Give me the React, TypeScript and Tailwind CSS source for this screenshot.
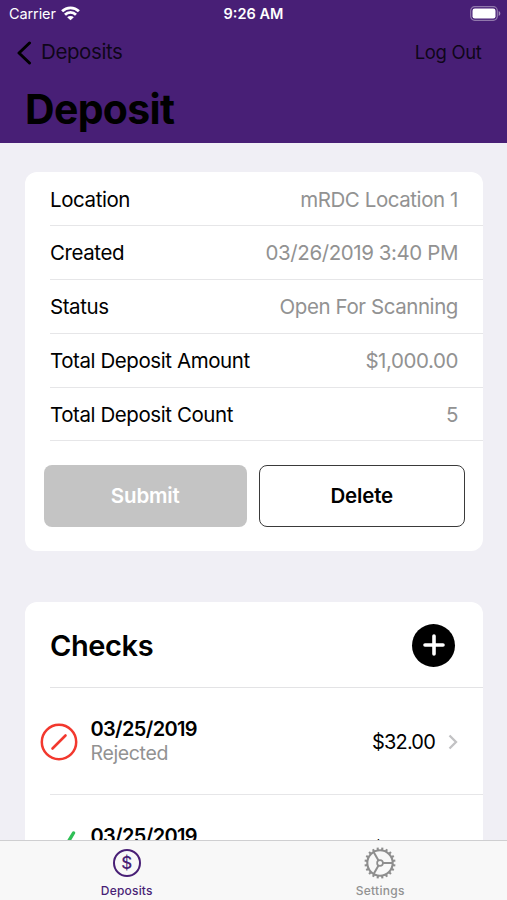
const details = [
  { label: 'Location', value: 'mRDC Location 1' },
  { label: 'Created', value: '03/26/2019 3:40 PM' },
  { label: 'Status', value: 'Open For Scanning' },
  { label: 'Total Deposit Amount', value: '$1,000.00' },
  { label: 'Total Deposit Count', value: '5' },
]

const checks = [
  { id: 1, date: '03/25/2019', status: 'Rejected', amount: '$32.00' },
  { id: 2, date: '03/25/2019', status: 'Accepted', amount: '$32.00' },
]

function WifiIcon() {
  return (
    <svg width="19" height="15" viewBox="0 0 19 15" fill="none" stroke="white" strokeWidth="2.8">
      <path d="M1.1 5.3a12 12 0 0 1 16.8 0" />
      <path d="M4 8.7a7.8 7.8 0 0 1 11 0" />
      <path d="M9.5 14.2 6.2 11.3a4.6 4.6 0 0 1 6.6 0Z" fill="white" stroke="none" />
    </svg>
  )
}

function BatteryIcon() {
  return (
    <svg width="31" height="15" viewBox="0 0 31 15">
      <rect x="0.7" y="0.7" width="26.6" height="13.6" rx="4" fill="none" stroke="white" strokeOpacity="0.4" strokeWidth="1.2" />
      <rect x="2.5" y="2.5" width="23" height="10" rx="2.3" fill="white" />
      <path d="M28.7 5v5c1-.4 1.6-1.4 1.6-2.5S29.7 5.4 28.7 5Z" fill="white" fillOpacity="0.5" />
    </svg>
  )
}

function StatusIcon({ status }: { status: string }) {
  if (status === 'Rejected') {
    return (
      <svg width="38" height="38" viewBox="0 0 38 38" fill="none" stroke="#f2382e" strokeWidth="2.5" strokeLinecap="round">
        <circle cx="19" cy="19" r="17.2" />
        <path d="M12.5 25.5 25.5 12.5" strokeWidth="2.6" />
      </svg>
    )
  }
  return (
    <svg width="38" height="38" viewBox="0 0 38 38" fill="none" stroke="#2fbf56" strokeWidth="3.4" strokeLinecap="round" strokeLinejoin="round">
      <path d="M6 22 15 34 33.5 3" />
    </svg>
  )
}

function GearIcon() {
  const teeth = Array.from({ length: 20 }, (_, i) => i * 18 + 9)
  return (
    <svg width="32" height="32" viewBox="-16 -16 32 32" fill="none" stroke="#8e8e8e">
      <circle r="12.7" strokeWidth="2.1" />
      {teeth.map((angle) => (
        <path key={angle} d="M13 0H15.5" strokeWidth="2.1" transform={`rotate(${angle})`} />
      ))}
      <circle r="2.9" strokeWidth="1.7" />
      {[0, 120, 240].map((angle) => (
        <path key={angle} d="M3 0H12.5" strokeWidth="2" transform={`rotate(${angle})`} />
      ))}
    </svg>
  )
}

export default function App() {
  return (
    <div className="flex h-[900px] w-[507px] flex-col overflow-hidden bg-[#f0eff5] font-['Inter','Liberation_Sans',sans-serif] text-black">
      {/* Header */}
      <header className="h-[142.5px] shrink-0 bg-[#481f76]">
        <div className="grid h-[27px] grid-cols-3 items-center pl-[9px] pr-[6px] text-[14.5px] leading-[27px] text-white">
          <div className="flex items-center gap-[5px]">
            <span className="tracking-[-0.1px]">Carrier</span>
            <WifiIcon />
          </div>
          <span className="pr-[3px] text-center font-semibold">9:26 AM</span>
          <div className="flex justify-end">
            <BatteryIcon />
          </div>
        </div>
        <div className="flex h-[51px] items-center justify-between pl-[17px] pr-[25.5px] text-black/80">
          <button className="flex items-center gap-[9px] text-[20.5px] tracking-[-0.4px]">
            <svg width="15" height="24" viewBox="0 0 15 24" fill="none" stroke="black" strokeWidth="3" strokeLinecap="round" strokeLinejoin="round">
              <path d="M12.5 2 2 12 12.5 22" />
            </svg>
            Deposits
          </button>
          <button className="text-[18.5px] tracking-[-0.35px]">Log Out</button>
        </div>
        <h1 className="pl-[25px] text-[41px] font-bold leading-[62px] tracking-[-0.7px]">Deposit</h1>
      </header>

      <main className="flex-1 overflow-hidden pl-[25px] pr-[24px] pt-[29px]">
        {/* Deposit details */}
        <section className="h-[379px] rounded-[12px] bg-white pt-[1px]">
          {details.map((row) => (
            <div key={row.label} className="ml-[25px] flex h-[53.8px] items-center justify-between border-b border-[#e6e6e8] pr-[25px] pt-[2px] text-[20.5px] tracking-[-0.42px]">
              <span>{row.label}</span>
              <span className="text-[#929292]">{row.value}</span>
            </div>
          ))}
          <div className="flex gap-[12px] px-[18.5px] pt-[23.5px] text-[20.5px] font-semibold tracking-[-0.15px]">
            <button className="h-[62px] flex-1 rounded-[8px] bg-[#c4c4c4] text-white">Submit</button>
            <button className="h-[62px] flex-1 rounded-[8px] border-[1.5px] border-[#3a3a3a] bg-white">Delete</button>
          </div>
        </section>

        {/* Checks */}
        <section className="mt-[51.5px] rounded-t-[12px] bg-white">
          <div className="ml-[25px] flex h-[86px] items-center justify-between border-b border-[#e3e3e5] pr-[28px] pt-[1px]">
            <h2 className="pt-[1px] text-[29px] font-semibold tracking-[-0.4px]">Checks</h2>
            <button className="flex size-[43px] items-center justify-center rounded-full bg-black">
              <svg width="22" height="22" viewBox="0 0 22 22" stroke="white" strokeWidth="3.6" strokeLinecap="round">
                <path d="M11 2V20M2 11H20" />
              </svg>
            </button>
          </div>
          {checks.map((check) => (
            <div key={check.id} className="h-[107px]">
              <div className="flex h-[106px] items-center pl-[15px] pt-[1px]">
                <StatusIcon status={check.status} />
                <div className="ml-[12.5px] flex-1 pb-[2px] leading-[24px]">
                  <p className="text-[20px] font-semibold tracking-[-0.65px]">{check.date}</p>
                  <p className="text-[19.5px] tracking-[-0.35px] text-[#929292]">{check.status}</p>
                </div>
                <span className="text-[20px] tracking-[-0.8px]">{check.amount}</span>
                <svg className="ml-[13px] mr-[25px]" width="10" height="16" viewBox="0 0 10 16" fill="none" stroke="#c2c2c4" strokeWidth="2.3">
                  <path d="M1.5 1.5 8 8 1.5 14.5" />
                </svg>
              </div>
              <div className="ml-[25px] h-px bg-[#e6e6e8]" />
            </div>
          ))}
        </section>
      </main>

      {/* Tab bar */}
      <nav className="grid h-[60px] shrink-0 grid-cols-2 border-t border-[#cfcfd1] bg-[#f8f8f8] text-[12px] font-medium">
        <button className="flex flex-col items-center pt-[6px] text-[#481f76]">
          <span className="flex h-[32px] items-center">
            <span className="flex size-[28.5px] items-center justify-center rounded-full border-2 border-[#481f76] text-[17px] leading-[22px]">
              $
            </span>
          </span>
          <span className="mt-[3px] leading-[18px] tracking-[0.2px]">Deposits</span>
        </button>
        <button className="flex flex-col items-center pt-[6px] text-[#929292]">
          <GearIcon />
          <span className="mt-[3px] leading-[18px] tracking-[0.3px]">Settings</span>
        </button>
      </nav>
    </div>
  )
}
